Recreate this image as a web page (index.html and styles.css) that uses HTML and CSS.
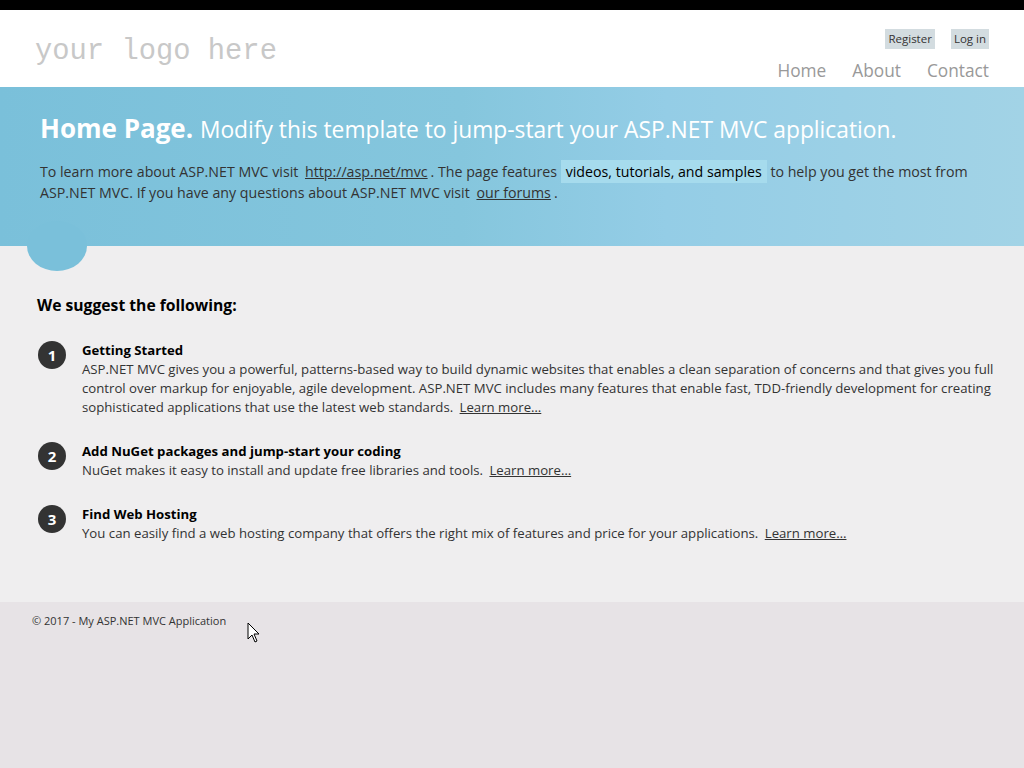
FILE: index.html
```html
<!DOCTYPE html>
<html lang="en">
<head>
<meta charset="utf-8">
<title>Home Page - My ASP.NET MVC Application</title>
<link rel="stylesheet" href="styles.css">
</head>
<body>
<div class="topbar"></div>
<header class="site-header">
  <div class="wrapper header-row">
    <div class="site-title">your logo here</div>
    <div class="header-right">
      <ul class="login">
        <li><a class="login-link" href="#">Register</a></li>
        <li><a class="login-link" href="#">Log in</a></li>
      </ul>
      <nav>
        <ul class="menu">
          <li><a href="#">Home</a></li>
          <li><a href="#">About</a></li>
          <li><a href="#">Contact</a></li>
        </ul>
      </nav>
    </div>
  </div>
</header>
<section class="featured">
  <div class="wrapper featured-inner">
    <h1 class="title"><span class="title-main">Home Page.</span> <span class="title-sub">Modify this template to jump-start your ASP.NET MVC application.</span></h1>
    <p class="intro">To learn more about ASP.NET MVC visit <a class="inline-link" href="#">http://asp.net/mvc</a>. The page features <mark class="mark">videos, tutorials, and samples</mark> to help you get the most from ASP.NET MVC. If you have any questions about ASP.NET MVC visit <a class="inline-link" href="#">our forums</a>.</p>
  </div>
  <div class="accent"></div>
</section>
<main class="main">
  <div class="wrapper main-inner">
    <h3 class="suggest">We suggest the following:</h3>
    <ol class="round">
      <li class="item">
        <span class="num">1</span>
        <div class="item-body">
          <h5 class="item-title">Getting Started</h5>
          <p class="item-text">ASP.NET MVC gives you a powerful, patterns-based way to build dynamic websites that enables a clean separation of concerns and that gives you full control over markup for enjoyable, agile development. ASP.NET MVC includes many features that enable fast, TDD-friendly development for creating sophisticated applications that use the latest web standards. <a class="inline-link" href="#">Learn more…</a></p>
        </div>
      </li>
      <li class="item">
        <span class="num">2</span>
        <div class="item-body">
          <h5 class="item-title">Add NuGet packages and jump-start your coding</h5>
          <p class="item-text">NuGet makes it easy to install and update free libraries and tools. <a class="inline-link" href="#">Learn more…</a></p>
        </div>
      </li>
      <li class="item">
        <span class="num">3</span>
        <div class="item-body">
          <h5 class="item-title">Find Web Hosting</h5>
          <p class="item-text">You can easily find a web hosting company that offers the right mix of features and price for your applications. <a class="inline-link" href="#">Learn more…</a></p>
        </div>
      </li>
    </ol>
  </div>
</main>
<footer class="footer">
  <div class="wrapper">
    <p class="copy">© 2017 - My ASP.NET MVC Application</p>
  </div>
</footer>
<svg class="cursor" width="14" height="22" viewBox="0 0 14 22"><path d="M1 1 L1 17 L5 13 L8 20 L10 19 L7 12 L12 12 Z" fill="#fff" stroke="#000" stroke-width="1"/></svg>
</body>
</html>
```
FILE: styles.css
```css
html, body {
  margin: 0;
  padding: 0;
}
body {
  font-family: "Open Sans", "Noto Sans", sans-serif;
  font-size: 13px;
  color: #333;
  background: #e7e3e6;
  min-height: 768px;
  position: relative;
}
.topbar {
  height: 10px;
  background: #000;
}
.wrapper {
  width: 960px;
  margin: 0 auto;
}
.site-header {
  background: #fff;
  height: 77px;
}
.header-row {
  display: flex;
  justify-content: space-between;
  height: 77px;
}
.site-title {
  font-family: "Liberation Mono", monospace;
  font-size: 28.8px;
  color: #c8c8c8;
  padding: 24px 0 0 3px;
  line-height: 36px;
}
.header-right {
  display: flex;
  flex-direction: column;
  align-items: flex-end;
  padding-right: 3px;
}
.login {
  list-style: none;
  margin: 19px 0 0;
  padding: 0;
  display: flex;
  gap: 16px;
}
.login-link {
  display: block;
  background: #d3dce0;
  color: #333;
  text-decoration: none;
  font-size: 11.5px;
  line-height: 20px;
  padding: 0 3px;
}
.menu {
  list-style: none;
  margin: 6px 0 0;
  padding: 0;
  display: flex;
  gap: 26px;
}
.menu a {
  color: #999;
  text-decoration: none;
  font-size: 17.3px;
  line-height: 32px;
}
.featured {
  height: 159px;
  background: linear-gradient(90deg, #7ac0da 0%, #85c6dd 45%, #94cde6 65%, #a2d3e6 100%);
  position: relative;
}
.featured-inner {
  padding: 19px 0 0 8px;
  box-sizing: border-box;
}
.title {
  margin: 0;
  color: #fff;
  line-height: 44px;
  font-weight: normal;
}
.title-main {
  font-size: 26px;
  font-weight: bold;
}
.title-sub {
  font-size: 22.8px;
}
.intro {
  margin: 9px 0 0;
  font-size: 14.2px;
  line-height: 21px;
  color: #333;
}
.inline-link {
  color: #333;
  text-decoration: underline;
  padding: 0 3px;
}
.mark {
  background: #a6dbed;
  color: #000;
  padding: 2px 5px;
}
.accent {
  position: absolute;
  left: 27px;
  top: 134px;
  width: 60px;
  height: 50px;
  border-radius: 50%;
  background: #7ac0da;
}
.main {
  background: #efeeef;
  height: 356px;
}
.main-inner {
  padding: 45px 0 0 5px;
  box-sizing: border-box;
}
.suggest {
  margin: 0;
  font-size: 15.7px;
  line-height: 28px;
  color: #000;
}
.round {
  list-style: none;
  margin: 0;
  padding: 0;
}
.item {
  display: flex;
  margin: 22px 0 0;
  position: relative;
}
.item + .item {
  margin-top: 25px;
}
.num {
  flex: none;
  width: 28px;
  height: 28px;
  border-radius: 50%;
  background: #333;
  color: #fff;
  font-weight: bold;
  font-size: 15px;
  line-height: 28px;
  text-align: center;
  margin: 0 16px 0 1px;
}
.item-body {
  flex: 1;
  margin-right: -12px;
}
.item-title {
  margin: 0;
  font-size: 13.2px;
  line-height: 19px;
  color: #000;
}
.item-text {
  margin: 0;
  font-size: 13.2px;
  line-height: 19px;
  color: #333;
}
.footer {
  background: #e7e3e6;
}
.copy {
  margin: 0;
  padding: 10px 0;
  font-size: 11px;
  line-height: 18px;
  color: #333;
}
.cursor {
  position: absolute;
  left: 247px;
  top: 622px;
}
```
